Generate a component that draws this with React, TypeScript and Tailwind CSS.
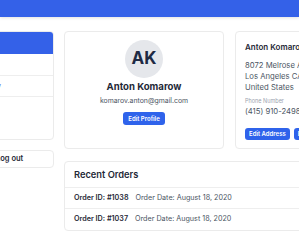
import React from "react";

const blue = "bg-[#3461e8]";

export default function App() {
  return (
    <div className="min-h-screen w-[299px] overflow-hidden bg-white font-['Inter',sans-serif] text-[#1f2937]">
      <div className={`h-[17px] ${blue} shadow-[0_1px_3px_rgba(0,0,0,0.12)]`} />
      <div className="-ml-[100px] flex gap-[10px] pt-[14px]">
        <aside className="flex w-[154px] shrink-0 flex-col gap-[10px]">
          <div className="overflow-hidden rounded-[4px] border border-[#ebebeb] bg-white">
            <div className={`flex h-[22px] items-center ${blue} pl-[45px] text-[8px] font-semibold text-white`}>
              My Account
            </div>
            <div className="flex h-[22px] items-center border-b border-[#eeeeee] pl-[49px] text-[8px] text-[#374151]">
              Profile
            </div>
            <div className="flex h-[21px] items-center border-b border-[#eeeeee] pl-[49px] text-[8px] text-[#4f74ee]">
              Order History
            </div>
            <div className="flex h-[42px] items-start pt-[6px] pl-[49px] text-[8px] text-[#374151]">
              Addresses
            </div>
          </div>
          <div className="flex h-[18px] items-center rounded-[4px] border border-[#ebebeb] bg-white pl-[95px] text-[7.5px] font-semibold text-[#1f2937]">
            Log out
          </div>
        </aside>
        <main className="flex shrink-0 flex-col gap-[12px]">
          <div className="flex gap-[11px]">
            <section className="flex h-[118px] w-[160px] flex-col items-center rounded-[4px] border border-[#ebebeb] bg-white pt-[8px]">
              <div className="flex h-[38px] w-[38px] items-center justify-center rounded-full bg-[#e5e7eb] text-[17px] font-bold text-[#1e2a44]">
                AK
              </div>
              <div className="mt-[2px] text-[9.6px] font-bold leading-[14px] text-[#1f2937]">Anton Komarow</div>
              <div className="mt-[1px] text-[6.9px] leading-[12px] text-[#4b5563]">komarov.anton@gmail.com</div>
              <button className="mt-[5px] h-[13px] rounded-[3px] bg-[#2f63eb] px-[5px] text-[6px] font-semibold leading-[13px] text-white">
                Edit Profile
              </button>
            </section>
            <section className="h-[118px] w-[160px] rounded-[4px] border border-[#ebebeb] bg-white pl-[9px] pt-[10px]">
              <div className="text-[8px] font-semibold leading-[11px] text-[#1f2937]">Anton Komarow</div>
              <div className="mt-[7px] text-[7.7px] leading-[11px] text-[#4b5563]">
                <div>8072 Melrose Ave</div>
                <div>Los Angeles CA 90046</div>
                <div>United States</div>
              </div>
              <div className="mt-[4px] text-[5.5px] leading-[9px] text-[#9ca3af]">Phone Number</div>
              <div className="text-[7.7px] leading-[11px] text-[#4b5563]">(415) 910-2498</div>
              <div className="mt-[11px] flex gap-[4px]">
                <button className="h-[12px] rounded-[3px] bg-[#2f63eb] px-[4px] text-[6px] font-semibold leading-[12px] text-white">
                  Edit Address
                </button>
                <button className="h-[12px] rounded-[3px] bg-[#2f63eb] px-[4px] text-[6px] font-semibold leading-[12px] text-white">
                  Edit Phone
                </button>
              </div>
            </section>
          </div>
          <section className="w-[331px] rounded-[4px] border border-[#ebebeb] bg-white">
            <div className="flex h-[26px] items-center border-b border-[#eeeeee] pl-[9px] text-[9.3px] font-semibold text-[#1f2937]">
              Recent Orders
            </div>
            <div className="flex h-[21px] items-center gap-[7px] border-b border-[#eeeeee] pl-[9px] text-[7.2px]">
              <span className="font-semibold text-[#1f2937]">Order ID: #1038</span>
              <span className="text-[#4b5563]">Order Date: August 18, 2020</span>
            </div>
            <div className="flex h-[21px] items-center gap-[7px] pl-[9px] text-[7.2px]">
              <span className="font-semibold text-[#1f2937]">Order ID: #1037</span>
              <span className="text-[#4b5563]">Order Date: August 18, 2020</span>
            </div>
          </section>
        </main>
      </div>
    </div>
  );
}
